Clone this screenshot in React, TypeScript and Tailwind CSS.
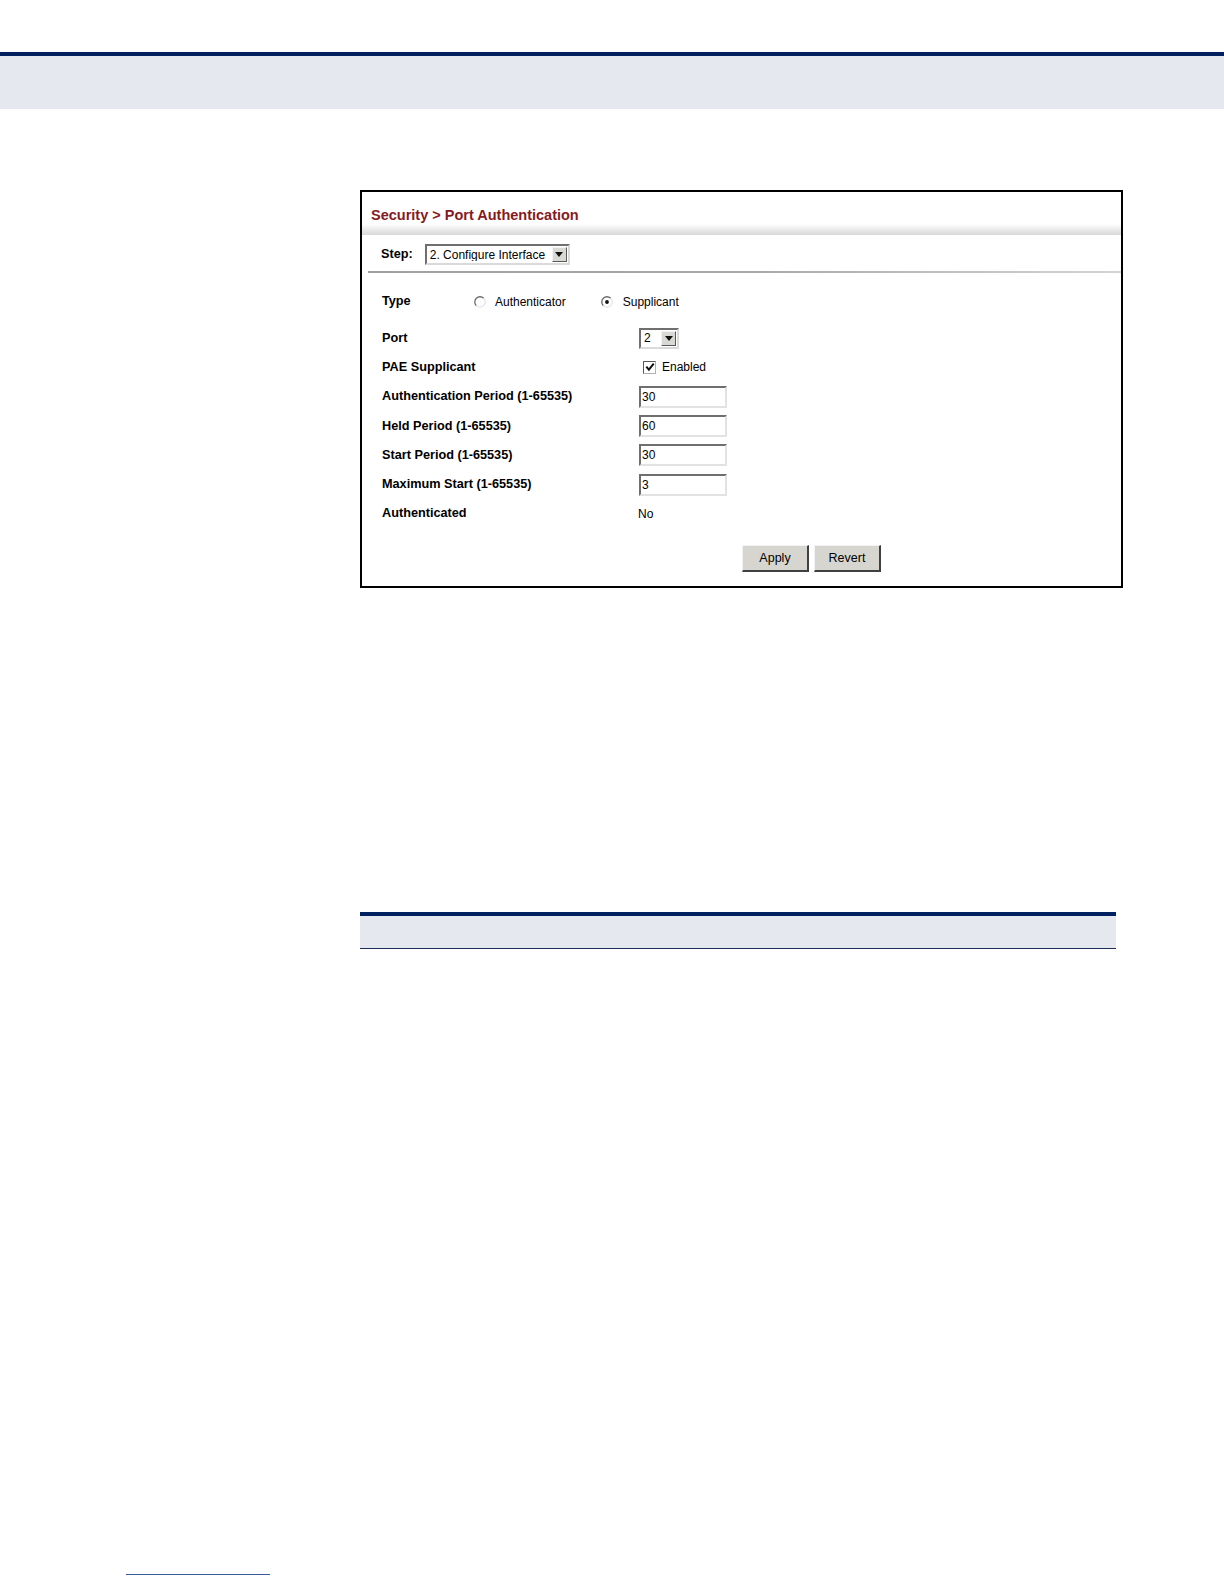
import React from "react";

const FONT = { fontFamily: "'Liberation Sans', Arial, sans-serif" };

function Radio({ checked }: { checked?: boolean }) {
  return (
    <svg width="12" height="12" viewBox="0 0 12 12" className="shrink-0">
      <circle cx="6" cy="6" r="5.2" fill="#fff" />
      <path d="M2.3 9.7 A5.2 5.2 0 0 1 9.7 2.3" fill="none" stroke="#6a6a6a" strokeWidth="1.3" />
      <path d="M9.7 2.3 A5.2 5.2 0 0 1 2.3 9.7" fill="none" stroke="#e2e2e2" strokeWidth="1.1" />
      {checked && <circle cx="6" cy="6" r="1.9" fill="#111" />}
    </svg>
  );
}

function Checkbox() {
  return (
    <div className="w-[13px] h-[13px] border border-t-[#5a5a5a] border-l-[#5a5a5a] border-b-[#b0b0b0] border-r-[#b0b0b0] bg-white flex items-center justify-center">
      <svg width="10" height="10" viewBox="0 0 10 10">
        <path d="M1.3 4.6 L3.9 7.6 L8.7 1.6" fill="none" stroke="#111" strokeWidth="2" />
      </svg>
    </div>
  );
}

function Select({ value, width }: { value: string; width: string }) {
  return (
    <div
      className={`${width} h-[21px] flex items-center border-2 border-t-[#6f6f6f] border-l-[#6f6f6f] border-b-[#dadada] border-r-[#dadada] bg-white`}
    >
      <span className="flex-1 pl-[3px] text-[12px] text-black leading-none whitespace-nowrap overflow-hidden">{value}</span>
      <div className="w-[15px] h-[15px] mr-[1px] bg-[#d8d8d4] border border-t-[#f4f4f4] border-l-[#f4f4f4] border-b-[#5a5a5a] border-r-[#5a5a5a] flex items-center justify-center shrink-0">
        <svg width="8" height="5" viewBox="0 0 8 5">
          <path d="M0 0 H8 L4 5 Z" fill="#111" />
        </svg>
      </div>
    </div>
  );
}

function TextBox({ value }: { value: string }) {
  return (
    <div className="w-[88px] h-[22px] flex items-center border-2 border-t-[#6f6f6f] border-l-[#6f6f6f] border-b-[#e2e2e2] border-r-[#e2e2e2] bg-white">
      <span className="pl-[1px] text-[12px] text-black leading-none">{value}</span>
    </div>
  );
}

function Row({ label, children }: { label: string; children: React.ReactNode }) {
  return (
    <div className="h-[29.3px] flex items-center">
      <div className="w-[257px] text-[12.7px] font-bold text-black whitespace-nowrap">{label}</div>
      <div className="flex items-center">{children}</div>
    </div>
  );
}

function Button({ label }: { label: string }) {
  return (
    <div className="w-[67px] h-[27px] flex items-center justify-center bg-[#d6d5d0] border-t border-l border-t-[#f2f2f2] border-l-[#f2f2f2] border-b-2 border-r-2 border-b-[#404040] border-r-[#404040] text-[12.5px] text-black">
      {label}
    </div>
  );
}

export default function App() {
  return (
    <div className="w-[1224px] h-[1584px] bg-white flex flex-col" style={FONT}>
      <div className="mt-[52px] h-[4px] bg-[#002060]" />
      <div className="h-[53px] bg-[#e5e8ef]" />

      <div className="mt-[81px] ml-[360px] w-[763px] h-[398px] border-2 border-black flex flex-col">
        <div className="h-[32px] pl-[9px] pt-[16px]">
          <span className="block text-[14.5px] leading-[14px] text-[#861a1e] font-bold whitespace-nowrap">
            Security &gt; Port Authentication
          </span>
        </div>
        <div className="h-[11px] bg-gradient-to-b from-white to-[#d8d8d8]" />
        <div className="h-[36px] pt-[3px] pl-[19px] flex items-center gap-[12px]">
          <span className="text-[12.7px] font-bold text-black">Step:</span>
          <Select value="2. Configure Interface" width="w-[145px]" />
        </div>
        <div className="ml-[6px] h-[2px] bg-gradient-to-r from-[#a0a0a0] via-[#a8a8a8] to-[#d4d4d4]" />

        <div className="pl-[20px] pt-[14px] flex flex-col">
          <div className="h-[29px] flex items-center">
            <div className="w-[92px] text-[12.7px] font-bold text-black">Type</div>
            <Radio />
            <span className="ml-[9px] text-[12px] text-black">Authenticator</span>
            <div className="ml-[35px]">
              <Radio checked />
            </div>
            <span className="ml-[10px] text-[12px] text-black">Supplicant</span>
          </div>
          <div className="h-[7.5px]" />
          <Row label="Port">
            <Select value="2" width="w-[40px]" />
          </Row>
          <Row label="PAE Supplicant">
            <div className="ml-[4px] flex items-center gap-[6px]">
              <Checkbox />
              <span className="text-[12px] text-black">Enabled</span>
            </div>
          </Row>
          <Row label="Authentication Period (1-65535)">
            <TextBox value="30" />
          </Row>
          <Row label="Held Period (1-65535)">
            <TextBox value="60" />
          </Row>
          <Row label="Start Period (1-65535)">
            <TextBox value="30" />
          </Row>
          <Row label="Maximum Start (1-65535)">
            <TextBox value="3" />
          </Row>
          <Row label="Authenticated">
            <span className="ml-[-1px] text-[12px] text-black">No</span>
          </Row>
          <div className="mt-[16.5px] ml-[360px] flex gap-[5px]">
            <Button label="Apply" />
            <Button label="Revert" />
          </div>
        </div>
      </div>

      <div className="mt-[324px] ml-[360px] w-[756px] flex flex-col">
        <div className="h-[4px] bg-[#002060]" />
        <div className="h-[32px] bg-[#e5e8ef]" />
        <div className="h-[1px] bg-[#1c2f5a]" />
      </div>

      <div className="mt-[625px] ml-[126px] w-[144px] h-[1px] bg-[#3a5a9a]" />
    </div>
  );
}
